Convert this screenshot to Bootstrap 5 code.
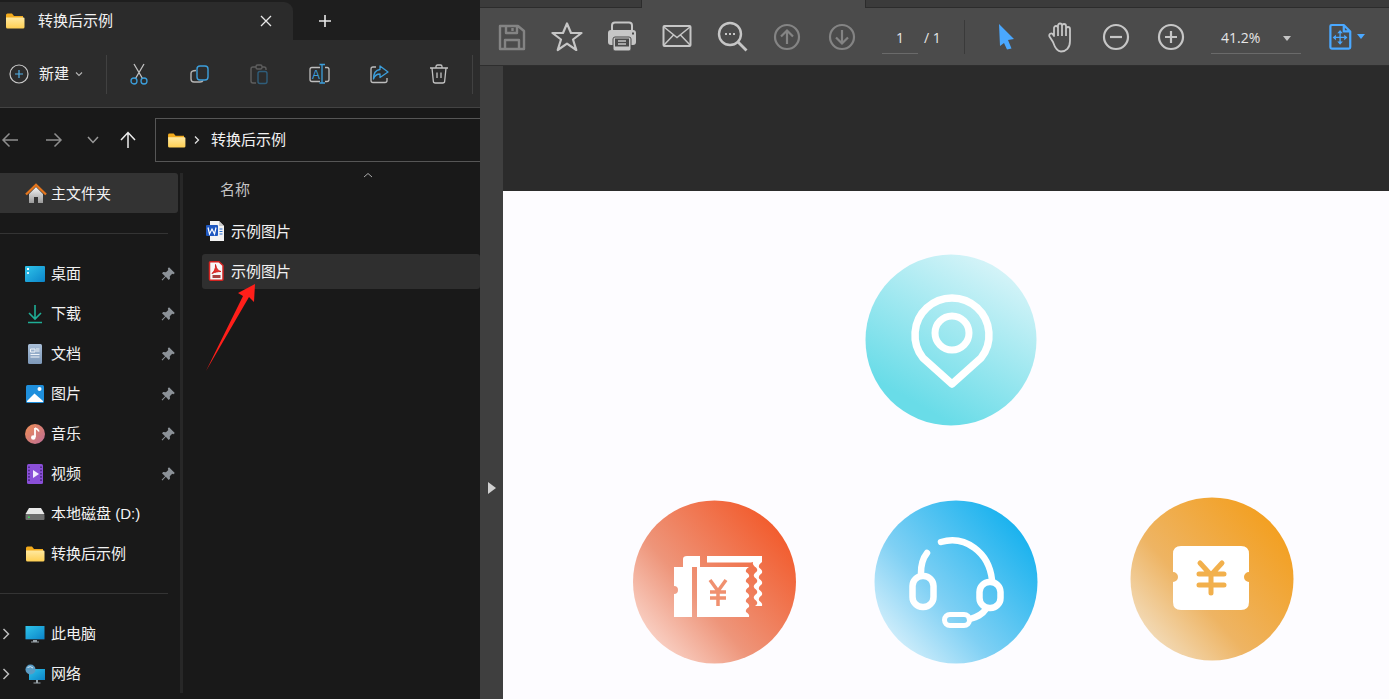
<!DOCTYPE html>
<html lang="zh-CN">

<head>
    <meta charset="UTF-8">
    <meta name="viewport" content="width=device-width, initial-scale=1.0">
    <title>转换后示例</title>
    <link href="https://cdn.jsdelivr.net/npm/bootstrap@5.3.0/dist/css/bootstrap.min.css" rel="stylesheet">
    <style>
        html, body { height: 100%; overflow: hidden; }
        body { background: #191919; font-family: "Liberation Sans", "Noto Sans CJK SC", sans-serif; font-size: 15px; color: #f2f2f2; }
        svg { display: block; flex: none; }
        .shot { width: 1389px; height: 699px; }

        /* explorer */
        .explorer { width: 480px; flex: none; overflow: hidden; }
        .tabstrip { height: 40px; background: #1e1e1e; padding-top: 2px; }
        .tab-active { width: 293px; background: #2b2b2b; border-top-right-radius: 9px; padding-left: 5px; }
        .tab-title { margin-left: 13px; width: 221px; }
        .add-tab { margin-left: 25px; margin-top: 12px; }
        .ex-toolbar { height: 68px; background: #2c2c2c; border-bottom: 1px solid #434343; padding-left: 9px; padding-top: 1px; }
        .ex-new { width: 97px; }
        .ex-new span { margin: 0 5px 0 10px; padding-top: 1px; }
        .ex-rule { width: 1px; height: 39px; background: #414141; }
        .ex-tool { width: 60px; display: flex; justify-content: center; }
        .ex-tools { padding-left: 2px; padding-right: 3px; }
        .addressrow { height: 65px; padding-bottom: 1px; }
        .nav-btn { width: 20px; flex: none; }
        .nav-forward { margin-left: 24px; }
        .nav-recent { margin-left: 19px; }
        .nav-up { margin-left: 15px; }
        .addr { width: 340px; flex: none; height: 44px; margin-left: 17px; border: 1px solid #565656; padding-left: 11px; }
        .addr span { margin-left: 11px; }
        .ex-main { height: 526px; }
        .side { width: 180px; flex: none; height: 520px; border-right: 3px solid #272727; box-sizing: content-box; }
        .side-item { height: 40px; padding-left: 25px; padding-top: 2px; }
        .side-item .label { margin-left: 6px; flex-grow: 1; white-space: nowrap; }
        .side-item .pin { margin-right: 5px; }
        .side-home { width: 178px; background: #333; border-radius: 0 3px 3px 0; }
        .side-home .label { margin-left: 4px; }
        .side-rule { height: 1px; width: 168px; background: #343434; }
        .side-gap-20 { height: 20px; }
        .side-gap-19 { height: 19px; }
        .side-chev { margin-left: -24px; margin-right: 14px; width: 10px; }
        .files { flex-grow: 1; padding-left: 19px; }
        .col-head { height: 41px; padding-left: 18px; padding-top: 6px; color: #c4c4c4; position: relative; }
        .sort-up { position: absolute; left: 160px; top: -1px; }
        .file-row { height: 35px; padding-left: 4px; margin-bottom: 5px; }
        .file-row svg { margin-top: -2px; }
        .file-row span { margin-left: 5px; padding-top: 2px; }
        .file-hover { background: #2f2f2f; border-radius: 3px; }
        .red-arrow { position: absolute; left: 200px; top: 280px; }

        /* pdf viewer */
        .viewer { flex-grow: 1; background: #3f3f3f; min-width: 0; }
        .pdf-tabs { height: 8px; background: #3b3b3b; border-bottom: 1px solid #2c2c2c; }
        .pdf-tab { width: 225px; height: 8px; margin-left: 161px; background: #4b4b4b; border: solid #2c2c2c; border-width: 0 1px; }
        .pdf-toolbar { height: 58px; background: #4b4b4b; border-bottom: 1px solid #2e2e2e; padding-left: 4px; font-family: "Open Sans", "Liberation Sans", sans-serif; font-size: 14px; color: #e6e6e6; }
        .pdf-tool { width: 55px; display: flex; justify-content: center; }
        .page-no { width: 36px; height: 32px; margin-left: 13px; line-height: 32px; text-align: center; border-bottom: 1px solid #6a6a6a; margin-top: 2px; }
        .page-total { margin-left: 6px; width: 25px; padding-top: 2px; }
        .pdf-rule { width: 1px; height: 34px; background: #3a3a3a; margin-left: 15px; margin-right: 13px; }
        .zoom-box { width: 90px; height: 32px; margin-left: 13px; margin-top: 2px; padding-left: 10px; line-height: 32px; border-bottom: 1px solid #6a6a6a; position: relative; }
        .caret-down { width: 0; height: 0; border-left: 4px solid transparent; border-right: 4px solid transparent; border-top: 5px solid #c4c4c4; }
        .zoom-box .caret-down { position: absolute; right: 10px; top: 14px; }
        .caret-blue { border-top-color: #4aa8ff; margin-left: 4px; }
        .page-fit { margin-left: 28px; }
        .pdf-body { height: 633px; }
        .gutter { width: 23px; flex: none; background: #3f3f3f; }
        .gutter-arrow { width: 0; height: 0; border-top: 6px solid transparent; border-bottom: 6px solid transparent; border-left: 8px solid #d0d0d0; margin-top: 416px; margin-left: 8px; }
        .canvas-top { height: 125px; background: #2b2b2b; }
        .pdf-page { background: #fdfcff; height: 508px; }
    </style>
</head>

<body>
    <!-- shared gradients and icons -->
    <svg width="0" height="0" class="position-absolute">
        <defs>
            <linearGradient id="gFolder" x1="0" y1="0" x2="0" y2="1"><stop offset="0" stop-color="#ffe9a0"/><stop offset="1" stop-color="#ffcf52"/></linearGradient>
            <linearGradient id="gLoc" x1=".3" y1="1" x2=".85" y2=".05"><stop offset=".1" stop-color="#69dce8"/><stop offset="1" stop-color="#dbf5f9"/></linearGradient>
            <linearGradient id="gRed" x1=".1" y1=".95" x2=".95" y2=".2"><stop offset="0" stop-color="#fbdcd3"/><stop offset=".4" stop-color="#ee957a"/><stop offset="1" stop-color="#f25a2b"/></linearGradient>
            <linearGradient id="gBlue" x1=".1" y1=".95" x2=".95" y2=".2"><stop offset="0" stop-color="#dff3fc"/><stop offset=".4" stop-color="#7fd0f4"/><stop offset="1" stop-color="#16b1ee"/></linearGradient>
            <linearGradient id="gGold" x1=".1" y1=".95" x2=".95" y2=".2"><stop offset="0" stop-color="#f3e2c8"/><stop offset=".4" stop-color="#eeb463"/><stop offset="1" stop-color="#f39f1f"/></linearGradient>
            <linearGradient id="gSky" x1="0" y1="0" x2="1" y2="1"><stop offset="0" stop-color="#2fc4ea"/><stop offset="1" stop-color="#0b84c9"/></linearGradient>
            <linearGradient id="gMusic" x1="0" y1="0" x2="1" y2="1"><stop offset="0" stop-color="#ef8f55"/><stop offset="1" stop-color="#bd6c97"/></linearGradient>
            <linearGradient id="gHome" x1="0" y1="0" x2="0" y2="1"><stop offset="0" stop-color="#f4f4f4"/><stop offset="1" stop-color="#9a9a9a"/></linearGradient>
            <linearGradient id="gDoc" x1="0" y1="0" x2="0" y2="1"><stop offset="0" stop-color="#a9bfd8"/><stop offset="1" stop-color="#7d98b8"/></linearGradient>
            <symbol id="folder" viewBox="0 0 20 16">
                <path d="M1 2a1.500 1.500 0 0 1 1.500-1.500H7L9 3H18v3H1z" fill="#f3ab1c"/>
                <path d="M1 4.500H18.500a1 1 0 0 1 1 1V14a1.500 1.500 0 0 1-1.500 1.500H2.500A1.500 1.500 0 0 1 1 14z" fill="url(#gFolder)"/>
            </symbol>
            <symbol id="pin" viewBox="0 0 14 14">
                <path d="M8 .2 13.800 6 12.400 7.200 11.200 6.700 8.800 9.200 9 11.800 7.700 13 4.800 9.800 1.400 13.500.6 12.800 4.100 9.200 1 6.300 2.200 5 4.900 5.300 7.300 3 6.800 1.600z" fill="#8c9298"/>
            </symbol>
        </defs>
    </svg>

    <div class="shot d-flex">
        <!-- file explorer -->
        <div class="explorer position-relative">
            <div class="tabstrip d-flex">
                <div class="tab-active d-flex align-items-center">
                    <svg width="20" height="16"><use href="#folder"/></svg>
                    <span class="tab-title">转换后示例</span>
                    <svg width="14" height="14" viewBox="0 0 14 14" stroke="#e8e8e8" stroke-width="1.300"><path d="M2 2 12 12M12 2 2 12"/></svg>
                </div>
                <svg class="add-tab" width="14" height="14" viewBox="0 0 14 14" stroke="#e8e8e8" stroke-width="1.600"><path d="M7 1V13M1 7H13"/></svg>
            </div>

            <div class="ex-toolbar d-flex align-items-center">
                <div class="ex-new d-flex align-items-center">
                    <svg width="20" height="20" viewBox="0 0 20 20" fill="none"><circle cx="10" cy="10" r="9" stroke="#c9c9c9" stroke-width="1.200"/><path d="M10 6V14M6 10H14" stroke="#52b0e6" stroke-width="1.200"/></svg>
                    <span>新建</span>
                    <svg width="10" height="10" viewBox="0 0 10 10" fill="none" stroke="#b5b5b5" stroke-width="1.100"><path d="M2 3.500 5 6.500 8 3.500"/></svg>
                </div>
                <div class="ex-rule"></div>
                <div class="ex-tools d-flex">
                    <div class="ex-tool">
                        <svg width="24" height="24" viewBox="0 0 24 24" fill="none" stroke-width="1.300">
                            <path d="M8.500 16.500 17 2M15.500 16.500 7 2" stroke="#c2c2c2"/>
                            <circle cx="7" cy="19" r="3" stroke="#3c9fdc"/><circle cx="17" cy="19" r="3" stroke="#3c9fdc"/>
                        </svg>
                    </div>
                    <div class="ex-tool">
                        <svg width="24" height="24" viewBox="0 0 24 24" fill="none" stroke-width="1.400">
                            <path d="M9 8.500Q4 8.500 4 11.500V17Q4 20 7 20H13Q15.500 20 16 18.500" stroke="#b5b5b5"/>
                            <rect x="10" y="4" width="11" height="14" rx="3" stroke="#3c9fdc"/>
                        </svg>
                    </div>
                    <div class="ex-tool">
                        <svg width="24" height="24" viewBox="0 0 24 24" fill="none" stroke-width="1.400">
                            <path d="M9 5H6a2 2 0 0 0-2 2V19a2 2 0 0 0 2 2H9M15 5H17a2 2 0 0 1 2 2V8" stroke="#5e5e5e"/>
                            <rect x="9" y="3" width="6" height="4" rx="1.500" stroke="#5e5e5e"/>
                            <rect x="11" y="9.500" width="9" height="12" rx="2" stroke="#2f5d7a"/>
                        </svg>
                    </div>
                    <div class="ex-tool">
                        <svg width="24" height="24" viewBox="0 0 24 24" fill="none" stroke-width="1.300">
                            <path d="M13 5.500H5a2 2 0 0 0-2 2V17.500a2 2 0 0 0 2 2H13M18 5.500H20a2 2 0 0 1 2 2V17.500a2 2 0 0 1-2 2H18" stroke="#bdbdbd"/>
                            <path d="M12.500 2.500H18M15 2.500V21M12.500 21H18" stroke="#3c9fdc"/>
                            <text x="5" y="16.500" font-size="12" fill="#3c9fdc" stroke="none" font-family="Liberation Sans">A</text>
                        </svg>
                    </div>
                    <div class="ex-tool">
                        <svg width="24" height="24" viewBox="0 0 24 24" fill="none" stroke-width="1.300">
                            <path d="M9 5H6a2 2 0 0 0-2 2V18.500a2 2 0 0 0 2 2H18a2 2 0 0 0 2-2V16" stroke="#bdbdbd"/>
                            <path d="M13 4 21 10 13 15.500V12C9.500 12 7.500 14 6.500 17 6.500 11 9 8 13 7.500Z" stroke="#3c9fdc" stroke-linejoin="round"/>
                        </svg>
                    </div>
                    <div class="ex-tool">
                        <svg width="24" height="24" viewBox="0 0 24 24" fill="none" stroke="#c2c2c2" stroke-width="1.300">
                            <path d="M3 6H21M9 6V4.500A1.500 1.500 0 0 1 10.500 3H13.500A1.500 1.500 0 0 1 15 4.500V6M5 6 6.300 19a2 2 0 0 0 2 2H15.700a2 2 0 0 0 2-2L19 6M10 10.500V16M14 10.500V16"/>
                        </svg>
                    </div>
                </div>
                <div class="ex-rule"></div>
            </div>

            <div class="addressrow d-flex align-items-center">
                <div class="nav-btn d-flex justify-content-center">
                    <svg width="18" height="16" viewBox="0 0 18 16" fill="none" stroke="#8e8e8e" stroke-width="1.500"><path d="M17 8H2M8.500 1.500 2 8 8.500 14.500"/></svg>
                </div>
                <div class="nav-btn nav-forward d-flex justify-content-center">
                    <svg width="18" height="16" viewBox="0 0 18 16" fill="none" stroke="#8e8e8e" stroke-width="1.500"><path d="M1 8H16M9.500 1.500 16 8 9.500 14.500"/></svg>
                </div>
                <div class="nav-btn nav-recent d-flex justify-content-center">
                    <svg width="12" height="10" viewBox="0 0 12 10" fill="none" stroke="#9a9a9a" stroke-width="1.500"><path d="M1 2 6 7.500 11 2"/></svg>
                </div>
                <div class="nav-btn nav-up d-flex justify-content-center">
                    <svg width="16" height="18" viewBox="0 0 16 18" fill="none" stroke="#ededed" stroke-width="1.500"><path d="M8 17V2M1 9 8 1.500 15 9"/></svg>
                </div>
                <div class="addr d-flex align-items-center">
                    <svg width="19" height="15"><use href="#folder"/></svg>
                    <svg class="ms-2" width="6" height="10" viewBox="0 0 6 10" fill="none" stroke="#e0e0e0" stroke-width="1.300"><path d="M1 1.500 4.500 5 1 8.500"/></svg>
                    <span>转换后示例</span>
                </div>
            </div>

            <div class="ex-main d-flex">
                <div class="side">
                    <div class="side-item side-home d-flex align-items-center">
                        <svg width="22" height="22" viewBox="0 0 22 22"><path d="M4 11V20H9V14H13V20H18V11L11 4Z" fill="url(#gHome)"/><path d="M1 11.500 11 2 21 11.500" fill="none" stroke="#e4761e" stroke-width="2.400"/></svg>
                        <span class="label">主文件夹</span>
                    </div>
                    <div class="side-gap-20"></div>
                    <div class="side-rule"></div>
                    <div class="side-gap-19"></div>

                    <div class="side-item d-flex align-items-center">
                        <svg width="20" height="18" viewBox="0 0 20 18"><rect y="1" width="20" height="16" rx="1" fill="url(#gSky)"/><rect x="2" y="3" width="2" height="2" fill="#fff"/><rect x="2" y="7" width="2" height="2" fill="#cdeefa"/></svg>
                        <span class="label">桌面</span>
                        <svg class="pin" width="14" height="14"><use href="#pin"/></svg>
                    </div>
                    <div class="side-item d-flex align-items-center">
                        <svg width="20" height="20" viewBox="0 0 20 20" fill="none" stroke="#1fae96" stroke-width="1.600"><path d="M10 1V14M4 9 10 15 16 9M3 18.500H17"/></svg>
                        <span class="label">下载</span>
                        <svg class="pin" width="14" height="14"><use href="#pin"/></svg>
                    </div>
                    <div class="side-item d-flex align-items-center">
                        <svg width="20" height="20" viewBox="0 0 20 20"><rect x="3" width="14" height="20" rx="1.500" fill="url(#gDoc)"/><path d="M5.500 5H10V8H5.500ZM11 5H14.500M11 7H14.500M5.500 10.500H14.500M5.500 13H14.500" stroke="#eef3f8" fill="none"/></svg>
                        <span class="label">文档</span>
                        <svg class="pin" width="14" height="14"><use href="#pin"/></svg>
                    </div>
                    <div class="side-item d-flex align-items-center">
                        <svg width="20" height="20" viewBox="0 0 20 20"><rect x="1" y="1" width="18" height="18" rx="1.500" fill="#1f8fdc"/><path d="M2 17 9.500 9.500 18 17V18H2Z" fill="#fff"/><circle cx="14.500" cy="5" r="2" fill="#fff"/></svg>
                        <span class="label">图片</span>
                        <svg class="pin" width="14" height="14"><use href="#pin"/></svg>
                    </div>
                    <div class="side-item d-flex align-items-center">
                        <svg width="20" height="20" viewBox="0 0 20 20"><circle cx="10" cy="10" r="10" fill="url(#gMusic)"/><path d="M10 4V13" stroke="#fff" stroke-width="1.800"/><circle cx="8.300" cy="13.500" r="2.300" fill="#fff"/><path d="M10 4Q13 5 14 7.500" stroke="#fff" stroke-width="1.600" fill="none"/></svg>
                        <span class="label">音乐</span>
                        <svg class="pin" width="14" height="14"><use href="#pin"/></svg>
                    </div>
                    <div class="side-item d-flex align-items-center">
                        <svg width="20" height="20" viewBox="0 0 20 20"><rect x="2" width="16" height="20" rx="1.500" fill="#8a4fd8"/><path d="M8 6 14 10 8 14Z" fill="#f2ecff"/><path d="M4 2.500V17.500" stroke="#3c2170" stroke-width="1.400" stroke-dasharray="1.600 1.600"/><path d="M16 2.500V17.500" stroke="#3c2170" stroke-width="1.400" stroke-dasharray="1.600 1.600"/></svg>
                        <span class="label">视频</span>
                        <svg class="pin" width="14" height="14"><use href="#pin"/></svg>
                    </div>
                    <div class="side-item d-flex align-items-center">
                        <svg width="20" height="14" viewBox="0 0 20 14"><path d="M4 1H16L19.500 7H.5Z" fill="#e8e8e8"/><rect x=".5" y="7" width="19" height="6" rx="1" fill="#6e6e6e"/><rect x="3" y="9.500" width="1.800" height="1.500" fill="#3fdc5a"/></svg>
                        <span class="label">本地磁盘 (D:)</span>
                    </div>
                    <div class="side-item d-flex align-items-center">
                        <svg width="20" height="16"><use href="#folder"/></svg>
                        <span class="label">转换后示例</span>
                    </div>

                    <div class="side-gap-20"></div>
                    <div class="side-rule"></div>
                    <div class="side-gap-19"></div>

                    <div class="side-item d-flex align-items-center">
                        <svg class="side-chev" width="8" height="12" viewBox="0 0 8 12" fill="none" stroke="#bdbdbd" stroke-width="1.500"><path d="M1.500 1 6.500 6 1.500 11"/></svg>
                        <svg width="20" height="17" viewBox="0 0 20 17"><rect x=".5" width="19" height="13" fill="url(#gSky)"/><rect x=".5" y="13" width="19" height="1" fill="#1d3f55"/><path d="M8 14H12V15.500H14V16.500H6V15.500H8Z" fill="#9aa4aa"/></svg>
                        <span class="label">此电脑</span>
                    </div>
                    <div class="side-item d-flex align-items-center">
                        <svg class="side-chev" width="8" height="12" viewBox="0 0 8 12" fill="none" stroke="#bdbdbd" stroke-width="1.500"><path d="M1.500 1 6.500 6 1.500 11"/></svg>
                        <svg width="20" height="20" viewBox="0 0 20 20"><rect x="4" y="5" width="16" height="11" fill="url(#gSky)"/><path d="M11 16H13V18.500H15.500V19.500H8.500V18.500H11Z" fill="#9aa4aa"/><circle cx="5.500" cy="5.500" r="5" fill="#5a9cc4"/><path d="M2.500 3.500Q5.500 1.500 8 4" stroke="#d7e9f4" fill="none"/></svg>
                        <span class="label">网络</span>
                    </div>
                </div>

                <div class="files">
                    <div class="col-head">
                        名称
                        <svg class="sort-up" width="12" height="7" viewBox="0 0 12 7" fill="none" stroke="#a9a9a9"><path d="M2 5 6 1.500 10 5"/></svg>
                    </div>
                    <div class="file-row d-flex align-items-center">
                        <svg width="20" height="20" viewBox="0 0 20 20"><path d="M4 0H13L18 5V20H4Z" fill="#f3f3f3"/><path d="M13 0 18 5H13Z" fill="#c8c8c8"/><rect y="4" width="12" height="11" rx="1" fill="#1f58c0"/><path d="M2 6.500 3.500 13 6 8 8.500 13 10 6.500" fill="none" stroke="#fff" stroke-width="1.200"/><path d="M13.500 8H16.500M13.500 10.500H16.500M13.500 13H16.500" stroke="#2b6fd0"/></svg>
                        <span>示例图片</span>
                    </div>
                    <div class="file-row file-hover d-flex align-items-center">
                        <svg width="20" height="20" viewBox="0 0 20 20"><path d="M3.500 1.800Q3.500.8 4.500.8H13L17 4.500V18.200Q17 19.200 16 19.200H4.500Q3.500 19.200 3.500 18.200Z" fill="#f7f7f7" stroke="#d32320" stroke-width="1.500"/><path d="M6 12.500C8 11 10 7.500 9.500 3.500 10.500 8 12.500 10 15 10.500 12 10.500 9 11 6 12.500Z" fill="#e5322e" stroke="#d1201c" stroke-width="1"/><rect x="6.500" y="14" width="8" height="3" fill="#a8403e"/></svg>
                        <span>示例图片</span>
                    </div>
                </div>
            </div>

            <!-- red annotation arrow -->
            <svg class="red-arrow" width="60" height="95" viewBox="200 280 60 95">
                <path d="M206 371 243 296 238 293 255 284 254 302 249 297Z" fill="#ff1f1a"/>
            </svg>
        </div>

        <!-- pdf viewer -->
        <div class="viewer">
            <div class="pdf-tabs"><div class="pdf-tab"></div></div>
            <div class="pdf-toolbar d-flex align-items-center">
                <div class="pdf-tool">
                    <svg width="32" height="32" viewBox="0 0 32 32" fill="none" stroke="#848484" stroke-width="2.400" stroke-linejoin="round"><path d="M4 5H22L28 10V28H4ZM10 5V12H21V5M16.500 7V10M9 28V19H23V28"/></svg>
                </div>
                <div class="pdf-tool">
                    <svg width="32" height="32" viewBox="0 0 32 32" fill="none" stroke="#c6c6c6" stroke-width="2.200" stroke-linejoin="round"><path d="M16 2.500 20 12H30.500L22 18.500 25.300 29 16 22.700 6.700 29 10 18.500 1.500 12H12Z"/></svg>
                </div>
                <div class="pdf-tool">
                    <svg width="32" height="32" viewBox="0 0 32 32"><rect x="6" y="1.500" width="20" height="10" rx="3" fill="none" stroke="#c6c6c6" stroke-width="2"/><rect x="2" y="9" width="28" height="15" rx="3" fill="#c6c6c6"/><rect x="7" y="16" width="18" height="14" rx="2" fill="#c6c6c6" stroke="#4b4b4b" stroke-width="1"/><rect x="9" y="17.500" width="14" height="8" fill="#4b4b4b"/><path d="M12 20H20M12 23H20" stroke="#c6c6c6" stroke-width="1.500"/><rect x="26" y="11.500" width="2" height="2" fill="#4b4b4b"/></svg>
                </div>
                <div class="pdf-tool">
                    <svg width="32" height="32" viewBox="0 0 32 32" fill="none" stroke="#c6c6c6" stroke-width="2"><rect x="2.500" y="5" width="27" height="20" rx="1"/><path d="M3 6 16 16.500 29 6M3 24 12.500 14M29 24 19.500 14" stroke-width="1.500"/></svg>
                </div>
                <div class="pdf-tool">
                    <svg width="32" height="32" viewBox="0 0 32 32" fill="none" stroke="#c6c6c6"><circle cx="14" cy="13" r="11" stroke-width="2.400"/><path d="M22 21 30.500 29.500" stroke-width="2.800"/><path d="M9 13H19.500" stroke-width="2.200" stroke-dasharray="2 2"/></svg>
                </div>
                <div class="pdf-tool">
                    <svg width="32" height="32" viewBox="0 0 32 32" fill="none" stroke="#848484" stroke-width="2.200"><circle cx="16" cy="16" r="12"/><path d="M16 23V10M10 15.500 16 9.500 22 15.500"/></svg>
                </div>
                <div class="pdf-tool">
                    <svg width="32" height="32" viewBox="0 0 32 32" fill="none" stroke="#848484" stroke-width="2.200"><circle cx="16" cy="16" r="12"/><path d="M16 9V22M10 16.500 16 22.500 22 16.500"/></svg>
                </div>
                <div class="page-no">1</div>
                <div class="page-total">/ 1</div>
                <div class="pdf-rule"></div>
                <div class="pdf-tool">
                    <svg width="32" height="32" viewBox="0 0 32 32"><path d="M9 3 24 18 18 19 21.500 27.500 17 28.500 14 22 10 25Z" fill="#4aa8ff"/></svg>
                </div>
                <div class="pdf-tool">
                    <svg width="32" height="32" viewBox="0 0 32 32" fill="none" stroke="#c6c6c6" stroke-width="1.800" stroke-linejoin="round"><path d="M8 21 4.500 15.500A2 2 0 0 1 8 13.500L9 15V7A2 2 0 0 1 13 7V4.500A2 2 0 0 1 17 4.500V5A2 2 0 0 1 21 5V8A2 2 0 0 1 25 8V20C25 27 21 30.500 16 30.500 12 30.500 10 27 8 21ZM13 7V15M17 5V15M21 5V15"/></svg>
                </div>
                <div class="pdf-tool">
                    <svg width="32" height="32" viewBox="0 0 32 32" fill="none" stroke="#c6c6c6" stroke-width="2.200"><circle cx="16" cy="16" r="12"/><path d="M10 16H22"/></svg>
                </div>
                <div class="pdf-tool">
                    <svg width="32" height="32" viewBox="0 0 32 32" fill="none" stroke="#c6c6c6" stroke-width="2.200"><circle cx="16" cy="16" r="12"/><path d="M10 16H22M16 10V22"/></svg>
                </div>
                <div class="zoom-box">41.2%<div class="caret-down"></div></div>
                <div class="page-fit d-flex align-items-center">
                    <svg width="24" height="28" viewBox="0 0 26 30" fill="none" stroke="#4aa8ff" stroke-width="2.400" stroke-linejoin="round">
                        <path d="M3 2H16L23 9V26A1.500 1.500 0 0 1 21.500 27.500H3A1.500 1.500 0 0 1 1.500 26V3.500A1.500 1.500 0 0 1 3 2ZM16 2V9H23"/>
                        <path d="M12 10V21M7 15.500H17" stroke-width="1.400"/>
                        <path d="M12 7.500 15 11H9ZM12 23.500 15 20H9ZM4 15.500 7.500 12.500V18.500ZM20 15.500 16.500 12.500V18.500Z" fill="#4aa8ff" stroke="none"/>
                    </svg>
                    <div class="caret-down caret-blue"></div>
                </div>
            </div>

            <div class="pdf-body d-flex">
                <div class="gutter"><div class="gutter-arrow"></div></div>
                <div class="flex-grow-1">
                    <div class="canvas-top"></div>
                    <div class="pdf-page">
                        <!-- the document page is one picture; viewBox uses window coordinates -->
                        <svg width="886" height="508" viewBox="503 191 886 508">
                            <circle cx="951" cy="340" r="85.500" fill="url(#gLoc)"/>
                            <path d="M952 384 923 358A37 37 0 1 1 981 358Z" fill="none" stroke="#fff" stroke-width="7.500" stroke-linejoin="round"/>
                            <circle cx="952" cy="333" r="17" fill="none" stroke="#fff" stroke-width="7"/>

                            <circle cx="714.500" cy="582" r="81.500" fill="url(#gRed)"/>
                            <path d="M683 567V559Q683 556 687 556H700V567Z" fill="#fff"/>
                            <path d="M707 556H762V562q-4 2.750-3 5.500q4 2.750 3 5.500q-4 2.750-3 5.500q4 2.750 3 5.500q-4 2.750-3 5.500q4 2.750 3 5.500q-4 2.750-3 5.500q4 2.750 3 5.500H755q4-2.750 1-5.500q-4-2.750-1-5.500q4-2.750 1-5.500q-4-2.750-1-5.500q4-2.750 1-5.500q-4-2.750-1-5.500q4-2.750 1-5.500q-4-2.750-3-5.500L751 562.500H707Z" fill="#fff"/>
                            <path d="M674 567H692V617H674V594A4 4 0 0 0 674 586Z" fill="#fff"/>
                            <path d="M697 567H749q-4 2.500-3 5q4 2.500 3 5q-4 2.500-3 5q4 2.500 3 5q-4 2.500-3 5q4 2.500 3 5q-4 2.500-3 5q4 2.500 3 5q-4 2.500-3 5q4 2.500 3 5H697Z" fill="#fff"/>
                            <path d="M710 580 718 591 726 580M718 591V606M710 592H726M710 598H726" fill="none" stroke="#f0906f" stroke-width="3.500"/>

                            <circle cx="956" cy="582" r="81.500" fill="url(#gBlue)"/>
                            <g fill="none" stroke="#fff" stroke-width="6.500" stroke-linecap="round">
                                <path d="M941 542C965 535 989 552 992 580"/>
                                <path d="M927 553C923 558 921 565 921 573"/>
                                <rect x="912.500" y="576" width="21" height="31" rx="10"/>
                                <rect x="979.500" y="582" width="21" height="26" rx="10"/>
                                <path d="M986 609C982 615 977 617 970 619"/>
                                <rect x="944.500" y="614.500" width="25" height="11" rx="5.500" stroke-width="5"/>
                            </g>

                            <circle cx="1212" cy="579" r="81.500" fill="url(#gGold)"/>
                            <path d="M1181 546H1241Q1249 546 1249 554V572A5 5 0 0 0 1249 582V602Q1249 610 1241 610H1181Q1173 610 1173 602V582A5 5 0 0 0 1173 572V554Q1173 546 1181 546Z" fill="#fff"/>
                            <path d="M1200 563 1211 575 1222 563M1211 575V593M1199 574H1224M1199 585H1224" fill="none" stroke="#f2b04c" stroke-width="5" stroke-linecap="round"/>
                        </svg>
                    </div>
                </div>
            </div>
        </div>
    </div>

    <script src="https://cdn.jsdelivr.net/npm/bootstrap@5.3.0/dist/js/bootstrap.bundle.min.js"></script>
</body>

</html>
